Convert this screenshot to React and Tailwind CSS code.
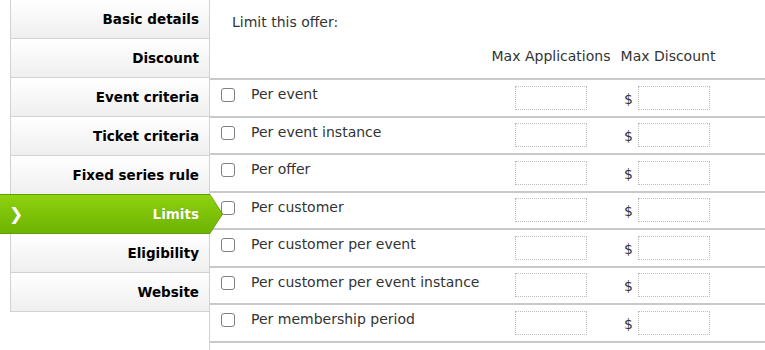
import React from "react";

const navItems = [
  "Basic details",
  "Discount",
  "Event criteria",
  "Ticket criteria",
  "Fixed series rule",
  "Limits",
  "Eligibility",
  "Website",
];

const rows = [
  "Per event",
  "Per event instance",
  "Per offer",
  "Per customer",
  "Per customer per event",
  "Per customer per event instance",
  "Per membership period",
];

function NavItem({ label }) {
  if (label === "Limits") {
    return (
      <div className="relative h-[40px] -mt-[1px] -ml-[11px] w-[224px] z-10">
        <div className="absolute inset-0 bg-[#5f9f05] [clip-path:polygon(0_0,210px_0,223px_50%,210px_100%,0_100%)]" />
        <div className="absolute inset-x-0 top-[1px] bottom-[1px] bg-gradient-to-b from-[#8ed20f] to-[#6db302] [clip-path:polygon(0_0,210px_0,222px_50%,210px_100%,0_100%)] flex items-center">
          <span className="pl-[9px] text-white text-[17px] leading-none">❯</span>
          <span className="ml-auto mr-[25px] text-white text-[13.5px] font-bold [text-shadow:0_0_1px_rgba(0,0,0,0.2)]">
            Limits
          </span>
        </div>
      </div>
    );
  }
  return (
    <div className="h-[39px] border-b border-[#d2d2d2] bg-gradient-to-b from-white to-[#efefef] flex items-center justify-end pr-[10px]">
      <span className="text-[13.5px] font-bold text-[#000]">{label}</span>
    </div>
  );
}

function Box() {
  return (
    <div className="w-[72px] h-[24px] border border-dotted border-[#bdbdbd] bg-white" />
  );
}

export default function App() {
  return (
    <div
      className="flex w-[765px] h-[350px] overflow-hidden bg-white text-[#333]"
      style={{ fontFamily: '"DejaVu Sans", Verdana, sans-serif' }}
    >
      <div className="w-[210px] shrink-0 pl-[10px]">
        <div className="border-l border-[#d2d2d2] w-[199px] flex flex-col">
          {navItems.map((n) => (
            <NavItem key={n} label={n} />
          ))}
        </div>
      </div>
      <div className="flex-1 border-l border-[#d2d2d2] -ml-[1px] h-[350px] flex flex-col text-[14px]">
        <div className="h-[45px] pl-[22px] pt-[13px] leading-[18px]">Limit this offer:</div>
        <div className="h-[33px] flex leading-[18px]">
          <div className="w-[272px]" />
          <div className="w-[138px] text-center pt-[2px]">Max Applications</div>
          <div className="w-[96px] text-center pt-[2px]">Max Discount</div>
        </div>
        {rows.map((r) => (
          <div key={r} className="h-[37.5px] border-t-2 border-[#c9c9c9] flex shrink-0">
            <div className="w-[41px] pl-[11px] pt-[8px]">
              <div className="w-[14px] h-[14px] border border-[#808080] rounded-[3px] bg-white" />
            </div>
            <div className="w-[231px] pt-[6px] leading-[16px]">{r}</div>
            <div className="w-[138px] flex justify-center items-center">
              <Box />
            </div>
            <div className="w-[96px] flex items-center pl-[4px]">
              <span className="w-[14px] leading-[16px] pt-[2px]">$</span>
              <Box />
            </div>
          </div>
        ))}
        <div className="border-t-2 border-[#c9c9c9]" />
      </div>
    </div>
  );
}
